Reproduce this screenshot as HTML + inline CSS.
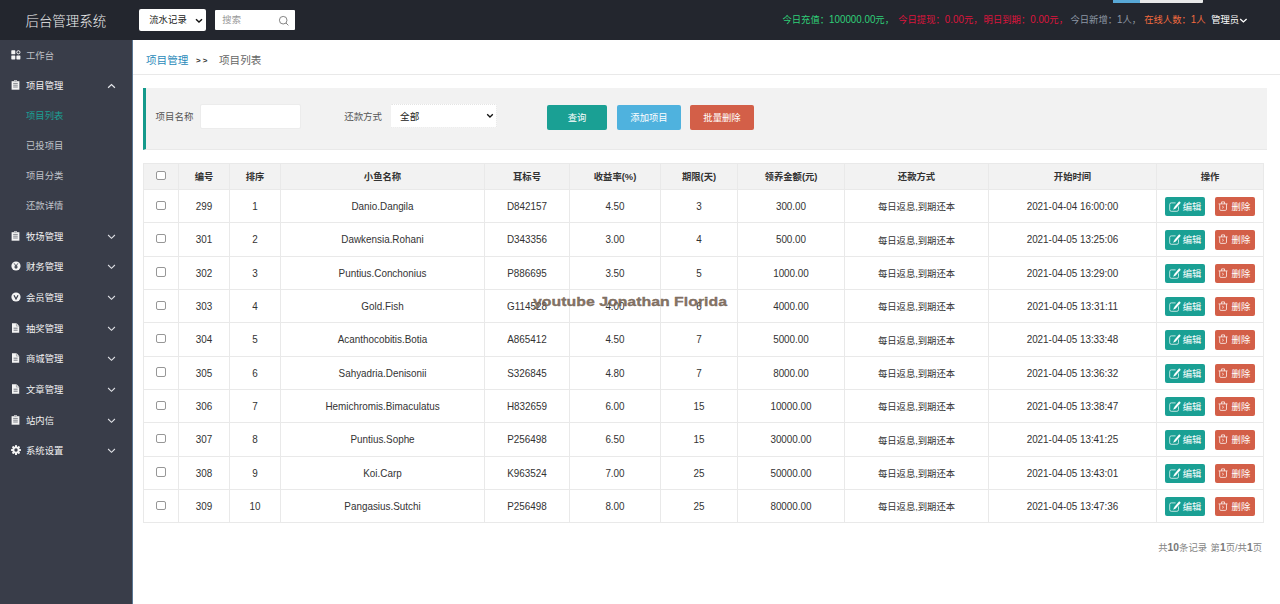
<!DOCTYPE html>
<html lang="zh-CN">
<head>
<meta charset="utf-8">
<title>后台管理系统</title>
<style>
*{box-sizing:border-box;margin:0;padding:0}
html,body{width:1280px;height:604px;overflow:hidden;background:#fff}
body{font-family:"Liberation Sans","Noto Sans CJK SC",sans-serif;font-size:9.33px;color:#333;position:relative}
.hdr{position:absolute;left:0;top:0;width:1280px;height:40px;background:#23262e}
.logo{position:absolute;left:-0.7px;top:2.1px;width:133px;height:40px;line-height:40px;text-align:center;color:#f0f0f0;font-size:13.45px;font-weight:300}
.hsel{position:absolute;left:139px;top:9px;width:67px;height:22px;background:#fff;border-radius:2px;color:#222;font-size:9.33px;line-height:23.5px;padding-left:10.2px;letter-spacing:0.1px}
.hsel svg{position:absolute;right:3px;top:8.6px}
.hsearch{position:absolute;left:215px;top:10px;width:80px;height:20px;background:#fff;border-radius:1px;color:#999;font-size:9.33px;line-height:21.5px;padding-left:7.3px}
.hsearch svg{position:absolute;right:5px;top:4.7px}
.pbar{position:absolute;left:1113px;top:0;width:90px;height:3px;background:#e8e8e8;border-radius:0 0 1px 1px}
.pbar i{display:block;width:27px;height:3px;background:#58a8d6}
.stats{position:absolute;left:0;top:0;width:1280px;height:40px;line-height:40px;font-size:9.33px;white-space:nowrap;color:#fff}
.stats span{position:absolute;top:0}
.stats i{font-style:normal;font-size:9.8px;display:inline-block;line-height:normal;transform:scaleY(1.12);transform-origin:50% 79%}
.side{position:absolute;left:0;top:40px;width:133px;height:564px;background:#393d49;border-right:1.2px solid #5a7794}
.mi{position:absolute;left:0;width:133px;height:30px;line-height:30px;color:#f2f2f2;font-size:9.33px;padding-left:26px}
.mi.dim{color:#bfc1c6}
.mi.sub{color:#c2c5cb}
.mi.act{color:#1aa094}
.mi svg.ic{position:absolute;left:11.3px;top:9.2px}
.mi svg.ar{position:absolute;left:107.3px;top:12px}
.bc{position:absolute;left:133px;top:40px;width:1147px;height:35px;border-bottom:1px solid #e9e9e9;line-height:40.5px;font-size:10.6px}
.bc a{position:absolute;left:13px;color:#2a8aba}
.bc b{position:absolute;left:63px;top:1.2px;font-weight:bold;color:#333;font-size:8px;letter-spacing:2.2px}
.bc span{position:absolute;left:86px;color:#666}
.panel{position:absolute;left:142.6px;top:88px;width:1124.7px;height:61.5px;background:#f2f2f2;border-left:3.5px solid #159a8c;border-bottom:1px solid #e9e9e9}
.lbl{position:absolute;top:0;height:58px;line-height:58px;font-size:9.45px;color:#555}
.inp{position:absolute;background:#fff;border:1px solid #ececec;border-radius:2px}
.btn{position:absolute;top:105px;height:24.6px;line-height:26.2px;text-align:center;color:#fff;font-size:9.33px;border-radius:2px}
table{position:absolute;left:143px;top:163px;width:1120px;border-collapse:collapse;table-layout:fixed;font-size:9.33px;color:#333}
th,td{border:1px solid #e9e9e9;text-align:center;padding:0;vertical-align:middle;white-space:nowrap}
th{height:26.1px;padding-bottom:1.8px;background:#f2f2f2;font-weight:bold;font-size:9.33px;color:#333}
td{height:33.33px}
td.l{font-size:9.9px;padding-top:0.6px}
td.l span{display:inline-block;transform:scaleY(1.13);transform-origin:50% 79%}
.cb{display:block;width:9.3px;height:9.3px;border:1px solid #979797;border-radius:2px;background:#fff;margin:0 auto;position:relative;top:-0.8px}
th .cb{top:-0.3px}
.ab{display:inline-block;height:19.4px;line-height:20.4px;width:40px;border-radius:2px;color:#fff;font-size:9.33px;vertical-align:middle;position:relative;text-align:left;padding-left:17.3px;top:0.5px;left:0.2px}
.ab svg{position:absolute;left:0;top:0}
.ed{background:#1aa094;margin-right:9.6px}
.de{background:#d35f48;padding-left:16.6px}
.pg{position:absolute;right:18px;top:541px;font-size:9.33px;color:#858585;line-height:14px;word-spacing:1px;white-space:nowrap}
.pg b{font-size:10.3px;color:#777}
.wm{position:absolute;left:533.4px;top:293.8px;font-family:"Liberation Sans",sans-serif;font-weight:bold;font-size:13px;line-height:15px;color:rgba(116,98,82,.9);-webkit-text-stroke:0.35px rgba(116,98,82,.9);white-space:nowrap;transform:scaleX(1.221);transform-origin:0 0}
</style>
</head>
<body>
<div class="hdr">
  <div class="logo">后台管理系统</div>
  <div class="hsel">流水记录<svg width="8" height="6" viewBox="0 0 8 6"><path d="M1 1.2 L4 4 L7 1.2" fill="none" stroke="#111" stroke-width="1.4"/></svg></div>
  <div class="hsearch">搜索<svg width="12" height="12" viewBox="0 0 12 12"><circle cx="5.2" cy="5.2" r="3.8" fill="none" stroke="#777" stroke-width="0.9"/><path d="M8 8 L10.4 10.4" stroke="#777" stroke-width="0.9"/></svg></div>
  <div class="pbar"><i></i></div>
  <div class="stats"><span style="left:782.4px;color:#2fcf78">今日充值：<i>100000.00</i>元，</span><span style="left:898.2px;color:#dc143c">今日提现：<i>0.00</i>元，</span><span style="left:983.6px;color:#dc143c">明日到期：<i>0.00</i>元，</span><span style="left:1070.4px;color:#8d97a5">今日新增：<i>1</i>人，</span><span style="left:1144.2px;color:#f26a3e">在线人数：<i>1</i>人</span><span style="left:1211.2px;color:#fff">管理员</span><svg width="9" height="6" viewBox="0 0 9 6" style="position:absolute;left:1239.4px;top:17.8px"><path d="M1.2 1L4.4 3.9L7.6 1" fill="none" stroke="#fff" stroke-width="1.3"/></svg></div>
</div>
<div class="side">
  <div class="mi dim" style="top:0.6px"><svg class="ic" width="10" height="10" viewBox="0 0 10 10"><rect x="0.3" y="0.3" width="4" height="4" rx="0.6" fill="#f4f4f4"/><rect x="0.3" y="5.4" width="4" height="4" rx="0.6" fill="#f4f4f4"/><rect x="5.4" y="5.4" width="4" height="4" rx="0.6" fill="#f4f4f4"/><circle cx="7.4" cy="2.3" r="1.6" fill="none" stroke="#f4f4f4" stroke-width="1"/></svg>工作台</div>
  <div class="mi " style="top:31.0px"><svg class="ic" width="9" height="10" viewBox="0 0 9 10"><path d="M0.6 1.2H8.4V9.7H0.6Z" fill="#f4f4f4"/><path d="M3 0.3H6V1.8H3Z" fill="#f4f4f4"/><path d="M2.2 3.4H6.8M2.2 5.2H6.8M2.2 7H6.8" stroke="#393d49" stroke-width="0.8" opacity="0.75"/><path d="M3.4 1.3H5.6" stroke="#393d49" stroke-width="0.6" opacity="0.7"/></svg>项目管理<svg class="ar" width="9" height="6" viewBox="0 0 9 6"><path d="M1.1 4.8L4.5 1.5L7.9 4.8" fill="none" stroke="#e6e8ec" stroke-width="1.2"/></svg></div>
  <div class="mi sub act" style="top:60.9px">项目列表</div>
  <div class="mi sub" style="top:90.9px">已投项目</div>
  <div class="mi sub" style="top:121.0px">项目分类</div>
  <div class="mi sub" style="top:151.0px">还款详情</div>
  <div class="mi " style="top:181.5px"><svg class="ic" width="9" height="10" viewBox="0 0 9 10"><path d="M0.6 1.2H8.4V9.7H0.6Z" fill="#f4f4f4"/><path d="M3 0.3H6V1.8H3Z" fill="#f4f4f4"/><path d="M2.2 3.4H6.8M2.2 5.2H6.8M2.2 7H6.8" stroke="#393d49" stroke-width="0.8" opacity="0.75"/><path d="M3.4 1.3H5.6" stroke="#393d49" stroke-width="0.6" opacity="0.7"/></svg>牧场管理<svg class="ar" width="9" height="6" viewBox="0 0 9 6"><path d="M1.1 1L4.5 4.3L7.9 1" fill="none" stroke="#dfe1e5" stroke-width="1.1"/></svg></div>
  <div class="mi " style="top:212.2px"><svg class="ic" width="10" height="10" viewBox="0 0 10 10"><circle cx="5" cy="5" r="4.6" fill="#f4f4f4"/><path d="M3.2 2.4L5 5L6.8 2.4M5 5V7.9M3.5 5.3H6.5M3.5 6.6H6.5" fill="none" stroke="#393d49" stroke-width="0.9"/></svg>财务管理<svg class="ar" width="9" height="6" viewBox="0 0 9 6"><path d="M1.1 1L4.5 4.3L7.9 1" fill="none" stroke="#dfe1e5" stroke-width="1.1"/></svg></div>
  <div class="mi " style="top:242.9px"><svg class="ic" width="10" height="10" viewBox="0 0 10 10"><circle cx="5" cy="5" r="4.6" fill="#f4f4f4"/><path d="M3 3.2L5 7L7 3.2" fill="none" stroke="#393d49" stroke-width="1.2"/></svg>会员管理<svg class="ar" width="9" height="6" viewBox="0 0 9 6"><path d="M1.1 1L4.5 4.3L7.9 1" fill="none" stroke="#dfe1e5" stroke-width="1.1"/></svg></div>
  <div class="mi " style="top:273.6px"><svg class="ic" width="9" height="10" viewBox="0 0 9 10"><path d="M1 0.3H5.6L8.2 2.9V9.7H1Z" fill="#f4f4f4"/><path d="M5.4 0.3V3.1H8.2" fill="none" stroke="#393d49" stroke-width="0.6" opacity="0.6"/><path d="M2.6 5.2H6.6M2.6 7.2H6.6" stroke="#393d49" stroke-width="0.9" opacity="0.75"/></svg>抽奖管理<svg class="ar" width="9" height="6" viewBox="0 0 9 6"><path d="M1.1 1L4.5 4.3L7.9 1" fill="none" stroke="#dfe1e5" stroke-width="1.1"/></svg></div>
  <div class="mi " style="top:304.3px"><svg class="ic" width="9" height="10" viewBox="0 0 9 10"><path d="M1 0.3H5.6L8.2 2.9V9.7H1Z" fill="#f4f4f4"/><path d="M5.4 0.3V3.1H8.2" fill="none" stroke="#393d49" stroke-width="0.6" opacity="0.6"/><path d="M2.6 5.2H6.6M2.6 7.2H6.6" stroke="#393d49" stroke-width="0.9" opacity="0.75"/></svg>商城管理<svg class="ar" width="9" height="6" viewBox="0 0 9 6"><path d="M1.1 1L4.5 4.3L7.9 1" fill="none" stroke="#dfe1e5" stroke-width="1.1"/></svg></div>
  <div class="mi " style="top:334.9px"><svg class="ic" width="9" height="10" viewBox="0 0 9 10"><path d="M1 0.3H5.6L8.2 2.9V9.7H1Z" fill="#f4f4f4"/><path d="M5.4 0.3V3.1H8.2" fill="none" stroke="#393d49" stroke-width="0.6" opacity="0.6"/><path d="M2.6 5.2H6.6M2.6 7.2H6.6" stroke="#393d49" stroke-width="0.9" opacity="0.75"/></svg>文章管理<svg class="ar" width="9" height="6" viewBox="0 0 9 6"><path d="M1.1 1L4.5 4.3L7.9 1" fill="none" stroke="#dfe1e5" stroke-width="1.1"/></svg></div>
  <div class="mi " style="top:365.6px"><svg class="ic" width="9" height="10" viewBox="0 0 9 10"><path d="M0.6 1.2H8.4V9.7H0.6Z" fill="#f4f4f4"/><path d="M3 0.3H6V1.8H3Z" fill="#f4f4f4"/><path d="M2.2 3.4H6.8M2.2 5.2H6.8M2.2 7H6.8" stroke="#393d49" stroke-width="0.8" opacity="0.75"/><path d="M3.4 1.3H5.6" stroke="#393d49" stroke-width="0.6" opacity="0.7"/></svg>站内信<svg class="ar" width="9" height="6" viewBox="0 0 9 6"><path d="M1.1 1L4.5 4.3L7.9 1" fill="none" stroke="#dfe1e5" stroke-width="1.1"/></svg></div>
  <div class="mi " style="top:396.3px"><svg class="ic" width="10" height="10" viewBox="0 0 10 10"><g fill="#f4f4f4"><circle cx="5" cy="5" r="3.6"/><rect x="4" y="0.1" width="2" height="9.8" rx="0.3"/><rect x="4" y="0.1" width="2" height="9.8" rx="0.3" transform="rotate(45 5 5)"/><rect x="4" y="0.1" width="2" height="9.8" rx="0.3" transform="rotate(90 5 5)"/><rect x="4" y="0.1" width="2" height="9.8" rx="0.3" transform="rotate(135 5 5)"/></g><circle cx="5" cy="5" r="1.7" fill="#393d49"/></svg>系统设置<svg class="ar" width="9" height="6" viewBox="0 0 9 6"><path d="M1.1 1L4.5 4.3L7.9 1" fill="none" stroke="#dfe1e5" stroke-width="1.1"/></svg></div>
</div>
<div class="bc"><a>项目管理</a><b>&gt;&gt;</b><span>项目列表</span></div>
<div class="panel">
  <div class="lbl" style="left:10px">项目名称</div>
  <div class="inp" style="left:54px;top:16.4px;width:101.6px;height:24.2px"></div>
  <div class="lbl" style="left:198.6px">还款方式</div>
  <div class="inp" style="left:244.5px;top:16.4px;width:107px;height:23.2px;line-height:23px;font-size:9.6px;padding-left:9px;color:#222;border-style:dotted;border-color:#e4e4e4">全部<svg width="8" height="6" viewBox="0 0 8 6" style="position:absolute;right:2px;top:7.6px"><path d="M1.2 1.2 L4 4 L6.8 1.2" fill="none" stroke="#111" stroke-width="1.3"/></svg></div>
</div>
<div class="btn" style="left:547px;width:60px;background:#1aa094">查询</div>
<div class="btn" style="left:617px;width:64px;background:#4fb2de">添加项目</div>
<div class="btn" style="left:690px;width:64px;background:#d35f48">批量删除</div>
<table>
<colgroup><col style="width:35px"><col style="width:51px"><col style="width:51px"><col style="width:204px"><col style="width:85px"><col style="width:91px"><col style="width:77px"><col style="width:107px"><col style="width:144px"><col style="width:168px"><col style="width:107px"></colgroup>
<tr><th><i class="cb"></i></th><th>编号</th><th>排序</th><th>小鱼名称</th><th>耳标号</th><th>收益率(%)</th><th>期限(天)</th><th>领养金额(元)</th><th>还款方式</th><th>开始时间</th><th>操作</th></tr>
<tr><td><i class="cb"></i></td><td class="l"><span>299</span></td><td class="l"><span>1</span></td><td class="l"><span>Danio.Dangila</span></td><td class="l"><span>D842157</span></td><td class="l"><span>4.50</span></td><td class="l"><span>3</span></td><td class="l"><span>300.00</span></td><td>每日返息,到期还本</td><td class="l"><span>2021-04-04 16:00:00</span></td><td><span class="ab ed"><svg width="18" height="19" viewBox="0 0 18 19"><path d="M10.6 5.9H6.3Q4.7 5.9 4.7 7.5V12.7Q4.7 14.3 6.3 14.3H11.9Q13.5 14.3 13.5 12.7V9.4" fill="none" stroke="#fff" stroke-width="0.8" opacity="0.9"/><path d="M15 5L9.9 10.9" stroke="#fff" stroke-width="2.1"/><path d="M9.2 10.1L8.2 12.7L10.8 11.6Z" fill="#fff"/></svg>编辑</span><span class="ab de"><svg width="18" height="19" viewBox="0 0 18 19"><path d="M3.6 6.9H12.5M6.6 6.8V4.9H9.5V6.8M4.7 7.1V12.2Q4.7 13.4 5.9 13.4H10.3Q11.5 13.4 11.5 12.2V7.1" fill="none" stroke="#fff" stroke-width="0.8" opacity="0.92"/><path d="M7.1 9L8.7 10.2L7.1 11.4" fill="none" stroke="#fff" stroke-width="0.7" opacity="0.9"/></svg>删除</span></td></tr>
<tr><td><i class="cb"></i></td><td class="l"><span>301</span></td><td class="l"><span>2</span></td><td class="l"><span>Dawkensia.Rohani</span></td><td class="l"><span>D343356</span></td><td class="l"><span>3.00</span></td><td class="l"><span>4</span></td><td class="l"><span>500.00</span></td><td>每日返息,到期还本</td><td class="l"><span>2021-04-05 13:25:06</span></td><td><span class="ab ed"><svg width="18" height="19" viewBox="0 0 18 19"><path d="M10.6 5.9H6.3Q4.7 5.9 4.7 7.5V12.7Q4.7 14.3 6.3 14.3H11.9Q13.5 14.3 13.5 12.7V9.4" fill="none" stroke="#fff" stroke-width="0.8" opacity="0.9"/><path d="M15 5L9.9 10.9" stroke="#fff" stroke-width="2.1"/><path d="M9.2 10.1L8.2 12.7L10.8 11.6Z" fill="#fff"/></svg>编辑</span><span class="ab de"><svg width="18" height="19" viewBox="0 0 18 19"><path d="M3.6 6.9H12.5M6.6 6.8V4.9H9.5V6.8M4.7 7.1V12.2Q4.7 13.4 5.9 13.4H10.3Q11.5 13.4 11.5 12.2V7.1" fill="none" stroke="#fff" stroke-width="0.8" opacity="0.92"/><path d="M7.1 9L8.7 10.2L7.1 11.4" fill="none" stroke="#fff" stroke-width="0.7" opacity="0.9"/></svg>删除</span></td></tr>
<tr><td><i class="cb"></i></td><td class="l"><span>302</span></td><td class="l"><span>3</span></td><td class="l"><span>Puntius.Conchonius</span></td><td class="l"><span>P886695</span></td><td class="l"><span>3.50</span></td><td class="l"><span>5</span></td><td class="l"><span>1000.00</span></td><td>每日返息,到期还本</td><td class="l"><span>2021-04-05 13:29:00</span></td><td><span class="ab ed"><svg width="18" height="19" viewBox="0 0 18 19"><path d="M10.6 5.9H6.3Q4.7 5.9 4.7 7.5V12.7Q4.7 14.3 6.3 14.3H11.9Q13.5 14.3 13.5 12.7V9.4" fill="none" stroke="#fff" stroke-width="0.8" opacity="0.9"/><path d="M15 5L9.9 10.9" stroke="#fff" stroke-width="2.1"/><path d="M9.2 10.1L8.2 12.7L10.8 11.6Z" fill="#fff"/></svg>编辑</span><span class="ab de"><svg width="18" height="19" viewBox="0 0 18 19"><path d="M3.6 6.9H12.5M6.6 6.8V4.9H9.5V6.8M4.7 7.1V12.2Q4.7 13.4 5.9 13.4H10.3Q11.5 13.4 11.5 12.2V7.1" fill="none" stroke="#fff" stroke-width="0.8" opacity="0.92"/><path d="M7.1 9L8.7 10.2L7.1 11.4" fill="none" stroke="#fff" stroke-width="0.7" opacity="0.9"/></svg>删除</span></td></tr>
<tr><td><i class="cb"></i></td><td class="l"><span>303</span></td><td class="l"><span>4</span></td><td class="l"><span>Gold.Fish</span></td><td class="l"><span>G114528</span></td><td class="l"><span>4.00</span></td><td class="l"><span>6</span></td><td class="l"><span>4000.00</span></td><td>每日返息,到期还本</td><td class="l"><span>2021-04-05 13:31:11</span></td><td><span class="ab ed"><svg width="18" height="19" viewBox="0 0 18 19"><path d="M10.6 5.9H6.3Q4.7 5.9 4.7 7.5V12.7Q4.7 14.3 6.3 14.3H11.9Q13.5 14.3 13.5 12.7V9.4" fill="none" stroke="#fff" stroke-width="0.8" opacity="0.9"/><path d="M15 5L9.9 10.9" stroke="#fff" stroke-width="2.1"/><path d="M9.2 10.1L8.2 12.7L10.8 11.6Z" fill="#fff"/></svg>编辑</span><span class="ab de"><svg width="18" height="19" viewBox="0 0 18 19"><path d="M3.6 6.9H12.5M6.6 6.8V4.9H9.5V6.8M4.7 7.1V12.2Q4.7 13.4 5.9 13.4H10.3Q11.5 13.4 11.5 12.2V7.1" fill="none" stroke="#fff" stroke-width="0.8" opacity="0.92"/><path d="M7.1 9L8.7 10.2L7.1 11.4" fill="none" stroke="#fff" stroke-width="0.7" opacity="0.9"/></svg>删除</span></td></tr>
<tr><td><i class="cb"></i></td><td class="l"><span>304</span></td><td class="l"><span>5</span></td><td class="l"><span>Acanthocobitis.Botia</span></td><td class="l"><span>A865412</span></td><td class="l"><span>4.50</span></td><td class="l"><span>7</span></td><td class="l"><span>5000.00</span></td><td>每日返息,到期还本</td><td class="l"><span>2021-04-05 13:33:48</span></td><td><span class="ab ed"><svg width="18" height="19" viewBox="0 0 18 19"><path d="M10.6 5.9H6.3Q4.7 5.9 4.7 7.5V12.7Q4.7 14.3 6.3 14.3H11.9Q13.5 14.3 13.5 12.7V9.4" fill="none" stroke="#fff" stroke-width="0.8" opacity="0.9"/><path d="M15 5L9.9 10.9" stroke="#fff" stroke-width="2.1"/><path d="M9.2 10.1L8.2 12.7L10.8 11.6Z" fill="#fff"/></svg>编辑</span><span class="ab de"><svg width="18" height="19" viewBox="0 0 18 19"><path d="M3.6 6.9H12.5M6.6 6.8V4.9H9.5V6.8M4.7 7.1V12.2Q4.7 13.4 5.9 13.4H10.3Q11.5 13.4 11.5 12.2V7.1" fill="none" stroke="#fff" stroke-width="0.8" opacity="0.92"/><path d="M7.1 9L8.7 10.2L7.1 11.4" fill="none" stroke="#fff" stroke-width="0.7" opacity="0.9"/></svg>删除</span></td></tr>
<tr><td><i class="cb"></i></td><td class="l"><span>305</span></td><td class="l"><span>6</span></td><td class="l"><span>Sahyadria.Denisonii</span></td><td class="l"><span>S326845</span></td><td class="l"><span>4.80</span></td><td class="l"><span>7</span></td><td class="l"><span>8000.00</span></td><td>每日返息,到期还本</td><td class="l"><span>2021-04-05 13:36:32</span></td><td><span class="ab ed"><svg width="18" height="19" viewBox="0 0 18 19"><path d="M10.6 5.9H6.3Q4.7 5.9 4.7 7.5V12.7Q4.7 14.3 6.3 14.3H11.9Q13.5 14.3 13.5 12.7V9.4" fill="none" stroke="#fff" stroke-width="0.8" opacity="0.9"/><path d="M15 5L9.9 10.9" stroke="#fff" stroke-width="2.1"/><path d="M9.2 10.1L8.2 12.7L10.8 11.6Z" fill="#fff"/></svg>编辑</span><span class="ab de"><svg width="18" height="19" viewBox="0 0 18 19"><path d="M3.6 6.9H12.5M6.6 6.8V4.9H9.5V6.8M4.7 7.1V12.2Q4.7 13.4 5.9 13.4H10.3Q11.5 13.4 11.5 12.2V7.1" fill="none" stroke="#fff" stroke-width="0.8" opacity="0.92"/><path d="M7.1 9L8.7 10.2L7.1 11.4" fill="none" stroke="#fff" stroke-width="0.7" opacity="0.9"/></svg>删除</span></td></tr>
<tr><td><i class="cb"></i></td><td class="l"><span>306</span></td><td class="l"><span>7</span></td><td class="l"><span>Hemichromis.Bimaculatus</span></td><td class="l"><span>H832659</span></td><td class="l"><span>6.00</span></td><td class="l"><span>15</span></td><td class="l"><span>10000.00</span></td><td>每日返息,到期还本</td><td class="l"><span>2021-04-05 13:38:47</span></td><td><span class="ab ed"><svg width="18" height="19" viewBox="0 0 18 19"><path d="M10.6 5.9H6.3Q4.7 5.9 4.7 7.5V12.7Q4.7 14.3 6.3 14.3H11.9Q13.5 14.3 13.5 12.7V9.4" fill="none" stroke="#fff" stroke-width="0.8" opacity="0.9"/><path d="M15 5L9.9 10.9" stroke="#fff" stroke-width="2.1"/><path d="M9.2 10.1L8.2 12.7L10.8 11.6Z" fill="#fff"/></svg>编辑</span><span class="ab de"><svg width="18" height="19" viewBox="0 0 18 19"><path d="M3.6 6.9H12.5M6.6 6.8V4.9H9.5V6.8M4.7 7.1V12.2Q4.7 13.4 5.9 13.4H10.3Q11.5 13.4 11.5 12.2V7.1" fill="none" stroke="#fff" stroke-width="0.8" opacity="0.92"/><path d="M7.1 9L8.7 10.2L7.1 11.4" fill="none" stroke="#fff" stroke-width="0.7" opacity="0.9"/></svg>删除</span></td></tr>
<tr><td><i class="cb"></i></td><td class="l"><span>307</span></td><td class="l"><span>8</span></td><td class="l"><span>Puntius.Sophe</span></td><td class="l"><span>P256498</span></td><td class="l"><span>6.50</span></td><td class="l"><span>15</span></td><td class="l"><span>30000.00</span></td><td>每日返息,到期还本</td><td class="l"><span>2021-04-05 13:41:25</span></td><td><span class="ab ed"><svg width="18" height="19" viewBox="0 0 18 19"><path d="M10.6 5.9H6.3Q4.7 5.9 4.7 7.5V12.7Q4.7 14.3 6.3 14.3H11.9Q13.5 14.3 13.5 12.7V9.4" fill="none" stroke="#fff" stroke-width="0.8" opacity="0.9"/><path d="M15 5L9.9 10.9" stroke="#fff" stroke-width="2.1"/><path d="M9.2 10.1L8.2 12.7L10.8 11.6Z" fill="#fff"/></svg>编辑</span><span class="ab de"><svg width="18" height="19" viewBox="0 0 18 19"><path d="M3.6 6.9H12.5M6.6 6.8V4.9H9.5V6.8M4.7 7.1V12.2Q4.7 13.4 5.9 13.4H10.3Q11.5 13.4 11.5 12.2V7.1" fill="none" stroke="#fff" stroke-width="0.8" opacity="0.92"/><path d="M7.1 9L8.7 10.2L7.1 11.4" fill="none" stroke="#fff" stroke-width="0.7" opacity="0.9"/></svg>删除</span></td></tr>
<tr><td><i class="cb"></i></td><td class="l"><span>308</span></td><td class="l"><span>9</span></td><td class="l"><span>Koi.Carp</span></td><td class="l"><span>K963524</span></td><td class="l"><span>7.00</span></td><td class="l"><span>25</span></td><td class="l"><span>50000.00</span></td><td>每日返息,到期还本</td><td class="l"><span>2021-04-05 13:43:01</span></td><td><span class="ab ed"><svg width="18" height="19" viewBox="0 0 18 19"><path d="M10.6 5.9H6.3Q4.7 5.9 4.7 7.5V12.7Q4.7 14.3 6.3 14.3H11.9Q13.5 14.3 13.5 12.7V9.4" fill="none" stroke="#fff" stroke-width="0.8" opacity="0.9"/><path d="M15 5L9.9 10.9" stroke="#fff" stroke-width="2.1"/><path d="M9.2 10.1L8.2 12.7L10.8 11.6Z" fill="#fff"/></svg>编辑</span><span class="ab de"><svg width="18" height="19" viewBox="0 0 18 19"><path d="M3.6 6.9H12.5M6.6 6.8V4.9H9.5V6.8M4.7 7.1V12.2Q4.7 13.4 5.9 13.4H10.3Q11.5 13.4 11.5 12.2V7.1" fill="none" stroke="#fff" stroke-width="0.8" opacity="0.92"/><path d="M7.1 9L8.7 10.2L7.1 11.4" fill="none" stroke="#fff" stroke-width="0.7" opacity="0.9"/></svg>删除</span></td></tr>
<tr><td><i class="cb"></i></td><td class="l"><span>309</span></td><td class="l"><span>10</span></td><td class="l"><span>Pangasius.Sutchi</span></td><td class="l"><span>P256498</span></td><td class="l"><span>8.00</span></td><td class="l"><span>25</span></td><td class="l"><span>80000.00</span></td><td>每日返息,到期还本</td><td class="l"><span>2021-04-05 13:47:36</span></td><td><span class="ab ed"><svg width="18" height="19" viewBox="0 0 18 19"><path d="M10.6 5.9H6.3Q4.7 5.9 4.7 7.5V12.7Q4.7 14.3 6.3 14.3H11.9Q13.5 14.3 13.5 12.7V9.4" fill="none" stroke="#fff" stroke-width="0.8" opacity="0.9"/><path d="M15 5L9.9 10.9" stroke="#fff" stroke-width="2.1"/><path d="M9.2 10.1L8.2 12.7L10.8 11.6Z" fill="#fff"/></svg>编辑</span><span class="ab de"><svg width="18" height="19" viewBox="0 0 18 19"><path d="M3.6 6.9H12.5M6.6 6.8V4.9H9.5V6.8M4.7 7.1V12.2Q4.7 13.4 5.9 13.4H10.3Q11.5 13.4 11.5 12.2V7.1" fill="none" stroke="#fff" stroke-width="0.8" opacity="0.92"/><path d="M7.1 9L8.7 10.2L7.1 11.4" fill="none" stroke="#fff" stroke-width="0.7" opacity="0.9"/></svg>删除</span></td></tr>
</table>
<div class="pg">共<b>10</b>条记录 第<b>1</b>页/共<b>1</b>页</div>
<div class="wm">youtube Jonathan Florida</div>
</body>
</html>
